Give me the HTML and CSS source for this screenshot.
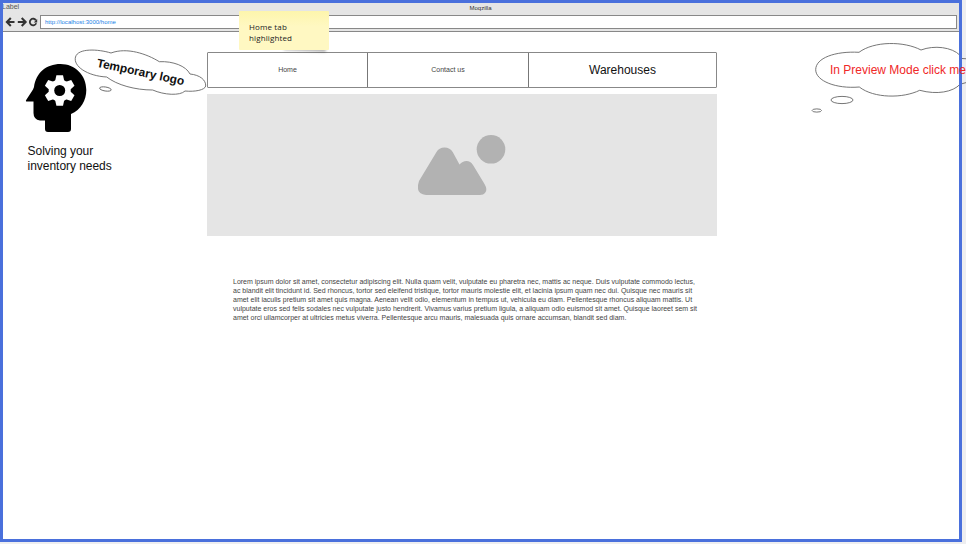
FILE: index.html
```html
<!DOCTYPE html>
<html lang="en">
<head>
<meta charset="utf-8">
<title>Moqzilla</title>
<link rel="stylesheet" href="styles.css">
</head>
<body>
<div class="window">
  <header class="chrome">
    <div class="titlebar"><span class="label">Label</span><span class="title">Moqzilla</span></div>
    <div class="toolbar">
      <svg class="controls" viewBox="0 0 35 14" width="35" height="14" fill="none" stroke="#333" stroke-width="2.1">
        <path d="M12.500 7H5M8.800 3.100L4.900 7L8.800 10.900"/>
        <path d="M15.800 7H23.300M19.700 3.100L23.600 7L19.700 10.900"/>
        <path stroke-width="1.800" d="M34.200 8.200A3.300 3.300 0 1 1 34 5.400"/>
        <path d="M35.200 3.900V7.500H31.800Z" fill="#333" stroke="none"/>
      </svg>
      <div class="address">http://localhost:3000/home</div>
    </div>
  </header>
  <main class="page">
    <aside class="brand">
      <svg class="logo" viewBox="0 0 62 70" width="62" height="70">
        <path d="M9 24C11 10 21 1 35.500 1C50 1 61.300 12 61.300 27C61.300 37 56 47 46 51V66Q46 69 43 69H23Q20 69 20 66V57.500H15Q8.500 56.500 8.500 50V38.500H2Q0 38.500 1.500 36.500L8 26.500Z"/>
        <g fill="#fff" transform="translate(34.700 27.500)">
          <circle r="11"/>
          <g id="tooth-pair"><path d="M-4.700 -9L-3.300 -15.200H3.300L4.700 -9V9L3.300 15.200H-3.300L-4.700 9Z"/></g>
          <use href="#tooth-pair" transform="rotate(60)"/>
          <use href="#tooth-pair" transform="rotate(120)"/>
          <circle r="5.500" fill="#000"/>
        </g>
      </svg>
      <p class="tagline">Solving your<br>inventory needs</p>
    </aside>
    <section class="content">
      <nav class="tabs">
        <a class="tab">Home</a><a class="tab">Contact us</a><a class="tab tab-large">Warehouses</a>
      </nav>
      <div class="hero">
        <svg viewBox="0 0 90 62" width="90" height="62" fill="#b2b2b2">
          <circle cx="74" cy="15.300" r="14.300"/>
          <path d="M2 47L19.500 18Q22 13.500 27.500 13.500Q33 13.500 35.700 18L42.500 30.500Q45.500 27 49.500 27Q53.500 27 56 31L67.500 50Q71 56 68 59Q66.500 61 63 61H9Q1.500 60 1 55Q0.800 50 2 47Z"/>
        </svg>
      </div>
      <p class="copy">Lorem ipsum dolor sit amet, consectetur adipiscing elit. Nulla quam velit, vulputate eu pharetra nec, mattis ac neque. Duis vulputate commodo lectus,<br>ac blandit elit tincidunt id. Sed rhoncus, tortor sed eleifend tristique, tortor mauris molestie elit, et lacinia ipsum quam nec dui. Quisque nec mauris sit<br>amet elit iaculis pretium sit amet quis magna. Aenean velit odio, elementum in tempus ut, vehicula eu diam. Pellentesque rhoncus aliquam mattis. Ut<br>vulputate eros sed felis sodales nec vulputate justo hendrerit. Vivamus varius pretium ligula, a aliquam odio euismod sit amet. Quisque laoreet sem sit<br>amet orci ullamcorper at ultricies metus viverra. Pellentesque arcu mauris, malesuada quis ornare accumsan, blandit sed diam.</p>
    </section>
  </main>
</div>
<svg class="clouds" viewBox="0 0 966 130" width="966" height="130">
  <g class="outline">
    <path d="M111 53C98 49 78 48 75.500 57C73 66 87 76 106.700 77C117 85 135 90 152.700 90C164 95 180 96 185 91C195 92 205 90 205.700 86C206 80 200 75 190 74C186 66 173 61 159.300 61.700C147 54 127 47 111 53Z"/>
    <ellipse cx="105.400" cy="89" rx="5.900" ry="2" transform="rotate(9 105.400 89)"/>
    <path d="M970 59L962 58.500Q961 56.500 960 55.300C952 47 934 45 921 50C904 41 874 41 859 52.300C835 51 815.700 58 815.700 69.700C815.700 81 836 89 859.300 87C874 98.500 903 98.500 919.700 90.300C937 95 953 92 960 84.300L970 81.500"/>
    <ellipse cx="842" cy="100" rx="11" ry="3.600"/>
    <ellipse cx="816.800" cy="110.500" rx="4.700" ry="1.600"/>
  </g>
</svg>
<div class="edge"></div>
<div class="note logo-note">Temporary logo</div>
<div class="note preview-note">In Preview Mode click me</div>
<div class="sticky">Home tab<br>highlighted</div>
</body>
</html>
```
FILE: styles.css
```css
* { box-sizing: border-box; }
body {
  margin: 0;
  width: 966px;
  height: 544px;
  overflow: hidden;
  position: relative;
  background: #eeeef0;
  font-family: "Liberation Sans", Arial, sans-serif;
}
p { margin: 0; }
.window {
  width: 962px;
  height: 542px;
  padding: 3px;
  background: #fff;
}
.edge {
  position: absolute;
  inset: 0 4px 2px 0;
  border: 3px solid #4a70dc;
}
.chrome {
  height: 29px;
  margin: 0 -1px;
  background: #e5e5e5;
  border-bottom: 1px solid #888;
}
.titlebar {
  display: grid;
  grid-template-columns: 1fr auto 1fr;
  height: 12px;
  font-size: 6px;
  line-height: 10px;
  color: #333;
}
.title { margin-left: -1px; }
.label { font-size: 7px; line-height: 8px; color: #555; }
.toolbar {
  display: flex;
  align-items: center;
  height: 14px;
  padding-right: 3px;
}
.controls { margin-right: 3px; overflow: visible; }
.address {
  flex: 1;
  height: 14px;
  padding-left: 4px;
  border: 1px solid #888;
  background: #fff;
  color: #1a80e6;
  font-size: 6px;
  letter-spacing: 0.02px;
  line-height: 12px;
}
.page { display: flex; }
.brand { width: 204px; padding: 31px 0 0 22px; }
.logo { display: block; }
.tagline {
  padding: 11px 0 0 2.600px;
  font-size: 12px;
  line-height: 15px;
  letter-spacing: -0.04px;
  color: #111;
}
.content { width: 510px; padding-top: 20px; }
.tabs {
  display: grid;
  grid-template-columns: 160px 161px 187px;
  height: 36px;
  border: 1px solid #888;
  border-radius: 1px;
}
.tab {
  display: flex;
  align-items: center;
  justify-content: center;
  padding-bottom: 1px;
  border-right: 1px solid #777;
  font-size: 7px;
  color: #444;
}
.tab-large { border-right: 0; font-size: 12px; color: #111; }
.hero {
  display: flex;
  align-items: center;
  justify-content: center;
  height: 142px;
  padding-bottom: 1px;
  margin-top: 6px;
  background: #e5e5e5;
}
.copy {
  padding: 41px 0 0 26px;
  white-space: nowrap;
  font-size: 7px;
  line-height: 9px;
  color: #444;
}
.clouds { position: absolute; left: 0; top: 0; }
.outline { fill: none; stroke: #666; stroke-width: 0.9; }
.note { position: absolute; white-space: nowrap; font-size: 12px; line-height: 14px; }
.logo-note {
  left: 96px;
  top: 65px;
  color: #111;
  font-weight: bold;
  letter-spacing: -0.05px;
  transform: rotate(12deg);
}
.preview-note { left: 830px; top: 63px; color: #f02828; }
.sticky {
  position: absolute;
  z-index: 1;
  left: 239px;
  top: 11px;
  width: 90px;
  height: 39px;
  padding: 10px 0 0 10px;
  border-radius: 1px;
  font: 8px/11px "Open Sans", sans-serif;
  letter-spacing: 0.13px;
  color: #222;
}
.sticky::before {
  content: "";
  position: absolute;
  z-index: -1;
  inset: 0;
  border-radius: 1px;
  background: linear-gradient(#fdf5ac, #fff8c2 40%);
}
.sticky::after {
  content: "";
  position: absolute;
  z-index: -2;
  right: 3px;
  bottom: 1px;
  width: 42px;
  height: 5px;
  box-shadow: 0 2px 3px rgba(0, 0, 0, 0.3);
  transform: rotate(3deg);
}
```
